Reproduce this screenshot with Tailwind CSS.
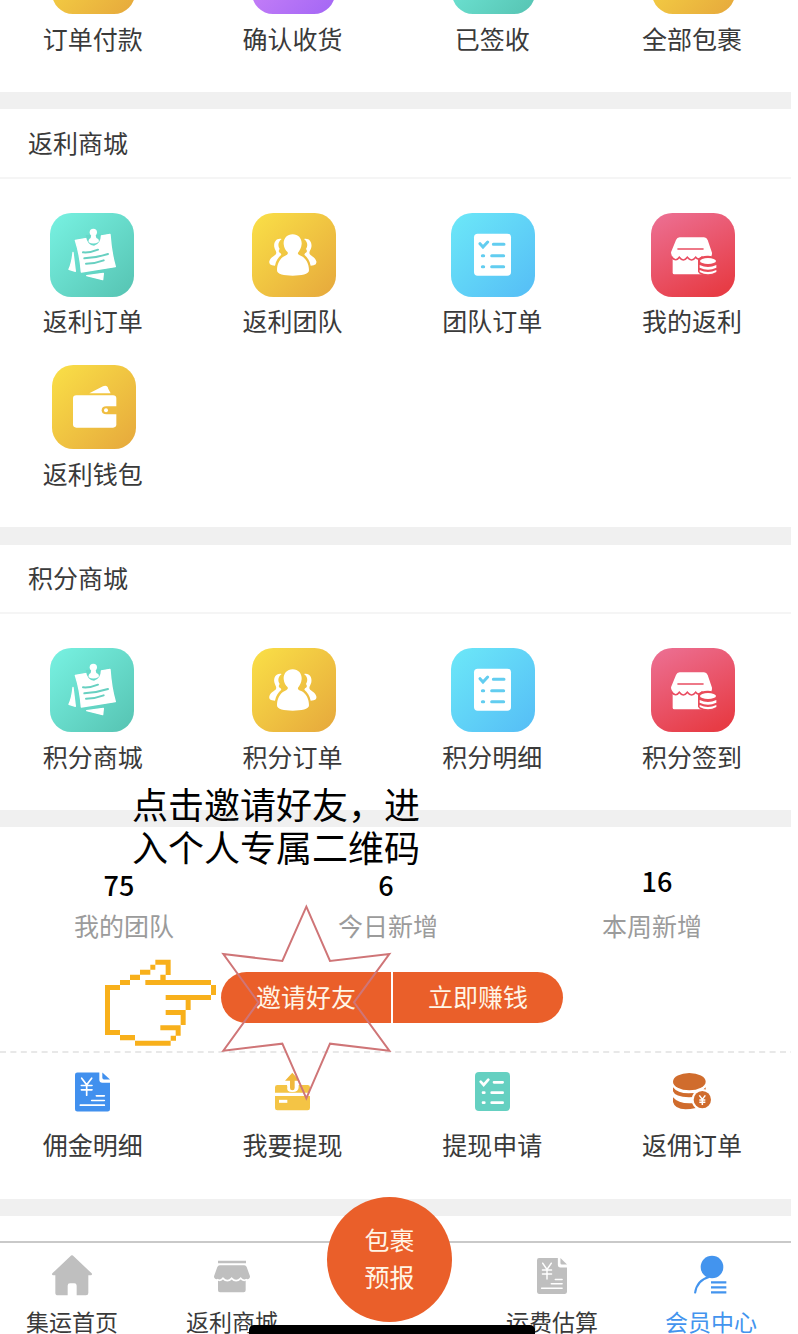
<!DOCTYPE html>
<html lang="zh-CN">
<head>
<meta charset="utf-8">
<title>会员中心</title>
<script src="https://cdn.jsdelivr.net/npm/@tailwindcss/browser@4"></script>
</head>
<body class="bg-white">
<svg class="absolute size-0">
  <defs>
    <linearGradient id="gTeal" x1="0" y1="0" x2="1" y2="1"><stop offset="0" stop-color="#78f2e2"/><stop offset="1" stop-color="#56c3b2"/></linearGradient>
    <linearGradient id="gGold" x1="0" y1="0" x2="1" y2="1"><stop offset="0" stop-color="#fae047"/><stop offset="1" stop-color="#e6a83c"/></linearGradient>
    <linearGradient id="gBlue" x1="0" y1="0" x2="1" y2="1"><stop offset="0" stop-color="#6ce8f8"/><stop offset="1" stop-color="#55bdf6"/></linearGradient>
    <linearGradient id="gRed" x1="0.2" y1="0" x2="0.7" y2="1"><stop offset="0" stop-color="#ec6d8f"/><stop offset="1" stop-color="#e73c45"/></linearGradient>
    <linearGradient id="gPurple" x1="0" y1="0" x2="1" y2="1"><stop offset="0" stop-color="#d78cf8"/><stop offset="1" stop-color="#a366f5"/></linearGradient>
  </defs>
  <symbol id="note" viewBox="0 0 252 252">
    <rect width="252" height="252" rx="64" fill="url(#gTeal)"/>
    <g fill="#fff" stroke="#fff" stroke-linejoin="round" stroke-width="4">
      <path d="M76 82 180 64 Q184 120 196 161 L94 177 Q90 125 76 82Z"/>
      <path d="M69 118 Q66 150 57 169 L76 175Z"/><path d="M110 188 160 181 158 200Z"/>
    </g>
    <path d="M107 66Q112 98 132 98Q152 94 153 64Z" fill="#67d9c9"/>
    <circle cx="130" cy="58" r="11" fill="#fff"/><path d="M124 64h12l3 11q10 3 7 12q-16 9-30 1q-2-9 6-13z" fill="#fff"/>
    <path d="M99 118 Q120 120 144 110M103 136 Q140 134 174 123M108 152 Q135 152 161 142" fill="none" stroke="#67d0c1" stroke-width="6" stroke-linecap="round"/>
  </symbol>
  <symbol id="team" viewBox="0 0 252 252">
    <rect width="252" height="252" rx="64" fill="url(#gGold)"/>
    <g fill="#fff">
      <path d="M122 64c17 0 28 13 27 29c-1 12-6 20-11 26c-2 5 3 7 10 10c15 8 23 24 23 43c0 12-23 16-49 16s-47-4-47-16c0-19 8-36 23-43c7-3 11-6 9-11c-6-6-11-13-12-25c-1-16 10-29 27-29z"/>
      <path id="sidePerson" d="M89 78c-15-4-25 9-22 25c2 9 8 14 5 20c-3 6-16 8-20 22q-2 10 8 12l9 1c3-15 9-25 19-33l-2-4c-7-3-7-8-3-13c-7-11-4-23 6-30z"/>
      <use href="#sidePerson" transform="translate(245 0) scale(-1 1)"/>
    </g>
  </symbol>
  <symbol id="list" viewBox="0 0 252 252">
    <rect width="252" height="252" rx="64" fill="url(#gBlue)"/>
    <rect x="69" y="62" width="111" height="126" rx="11" fill="#fff"/>
    <path d="M87 92l9 10 14-15M127 94h32M122 128h36M122 161h36M94 128h4M94 161h4" stroke="#62cdf0" stroke-width="9" stroke-linecap="round" fill="none"/>
  </symbol>
  <symbol id="store" viewBox="0 0 252 252">
    <rect width="252" height="252" rx="64" fill="url(#gRed)"/>
    <path d="M86 73h73q8 0 11 8l13 38q1 14-11 14h-98q-14 0-14-15l15-37q3-8 11-8z" fill="#fff"/>
    <path d="M65 130h118v50q0 4-4 4H70q-5 0-5-5z" fill="#fff"/>
    <path d="M63 134q12 13 22-1q12 16 24 0q13 16 25 0q8 11 19-1M81 108h75" stroke="#e94d62" stroke-width="5" fill="none" stroke-linecap="round"/>
    <path d="M141 137q12-10 31-9q27 1 27 18v25q-2 18-30 17q-22-1-28-12z" fill="#e94b59"/>
    <ellipse cx="171" cy="144" rx="24" ry="9" fill="#fff"/>
    <path d="M146 156q25 12 50 0v8q-25 12-50 0zM146 171q25 12 50 0v6q-25 14-50 0z" fill="#fff"/>
  </symbol>
  <symbol id="wallet" viewBox="0 0 252 252">
    <rect width="252" height="252" rx="64" fill="url(#gGold)"/>
    <path d="M112 85l41-21q13-5 16 8l7 13z" fill="#fff"/>
    <rect x="63" y="91" width="130" height="97" rx="10" fill="#fff"/>
    <path d="M196 124h-33q-14 0-14 12t14 12h33z" fill="#efbd40"/><circle cx="162" cy="136" r="6" fill="#fff"/>
  </symbol>
  <symbol id="bill" viewBox="0 0 105 117">
    <path d="M7 0h66v22q0 9 9 9h23v79q0 7-7 7H7q-7 0-7-7V7q0-7 7-7z" fill="currentColor"/>
    <path d="M82 0l23 21H87q-5 0-5-5z" fill="currentColor"/>
    <path d="M20 17l15 20 15-20M35 37v31M19 39h32M19 52h32M64 70h24M50 84h38M16 98h72" stroke="#fff" stroke-width="5" fill="none" stroke-linecap="round"/>
  </symbol>
</svg>

<div class="relative h-[1334px] w-[791px] overflow-hidden font-['Noto_Sans_CJK_SC',sans-serif] text-[25px] leading-[36px] text-[#3a3a3a]">

  <section class="h-[92px] overflow-hidden">
    <div class="-ml-[7px] grid w-[799px] grid-cols-4 justify-items-center">
      <div class="flex flex-col items-center"><div class="flex h-[14px] items-end"><svg class="ml-[2px] size-[83px]"><rect width="83" height="83" rx="21" fill="url(#gGold)"/></svg></div><span class="mt-[6px]">订单付款</span></div>
      <div class="flex flex-col items-center"><div class="flex h-[14px] items-end"><svg class="ml-[2px] size-[83px]"><rect width="83" height="83" rx="21" fill="url(#gPurple)"/></svg></div><span class="mt-[6px]">确认收货</span></div>
      <div class="flex flex-col items-center"><div class="flex h-[14px] items-end"><svg class="ml-[2px] size-[83px]"><rect width="83" height="83" rx="21" fill="url(#gTeal)"/></svg></div><span class="mt-[6px]">已签收</span></div>
      <div class="flex flex-col items-center"><div class="flex h-[14px] items-end"><svg class="ml-[2px] size-[83px]"><rect width="83" height="83" rx="21" fill="url(#gGold)"/></svg></div><span class="mt-[6px]">全部包裹</span></div>
    </div>
  </section>
  <div class="h-[17px] bg-[#f0f0f0]"></div>

  <section class="h-[418px]">
    <h2 class="flex h-[70px] items-center border-b-2 border-[#f5f5f5] pb-[3px] pl-[28px]">返利商城</h2>
    <div class="-ml-[7px] grid w-[799px] grid-cols-4 justify-items-center gap-y-[27px] pt-[34px]">
      <div class="flex flex-col items-center"><svg class="mr-[2px] size-[84px]"><use href="#note"/></svg><span class="mt-[5px]">返利订单</span></div>
      <div class="flex flex-col items-center"><svg class="ml-[2px] size-[84px]"><use href="#team"/></svg><span class="mt-[5px]">返利团队</span></div>
      <div class="flex flex-col items-center"><svg class="ml-[2px] size-[84px]"><use href="#list"/></svg><span class="mt-[5px]">团队订单</span></div>
      <div class="flex flex-col items-center"><svg class="ml-[2px] size-[84px]"><use href="#store"/></svg><span class="mt-[5px]">我的返利</span></div>
      <div class="flex flex-col items-center"><svg class="ml-[2px] size-[84px]"><use href="#wallet"/></svg><span class="mt-[6px]">返利钱包</span></div>
    </div>
  </section>
  <div class="h-[18px] bg-[#f0f0f0]"></div>

  <section class="h-[265px]">
    <h2 class="flex h-[69px] items-center border-b-2 border-[#f5f5f5] pb-[4px] pl-[28px]">积分商城</h2>
    <div class="-ml-[7px] grid w-[799px] grid-cols-4 justify-items-center pt-[34px]">
      <div class="flex flex-col items-center"><svg class="mr-[2px] size-[84px]"><use href="#note"/></svg><span class="mt-[6px]">积分商城</span></div>
      <div class="flex flex-col items-center"><svg class="ml-[2px] size-[84px]"><use href="#team"/></svg><span class="mt-[6px]">积分订单</span></div>
      <div class="flex flex-col items-center"><svg class="ml-[2px] size-[84px]"><use href="#list"/></svg><span class="mt-[6px]">积分明细</span></div>
      <div class="flex flex-col items-center"><svg class="ml-[2px] size-[84px]"><use href="#store"/></svg><span class="mt-[6px]">积分签到</span></div>
    </div>
  </section>
  <div class="h-[17px] bg-[#f0f0f0]"></div>

  <section class="flex h-[226px] flex-col">
    <div class="-ml-2 grid w-[792px] grid-cols-3 pt-[40px] text-center">
      <div class="flex flex-col text-[#9b9b9b]"><b class="mr-[10px] text-[27px] font-medium text-black">75</b><span class="mt-1">我的团队</span></div>
      <div class="flex flex-col text-[#9b9b9b]"><b class="mr-1 text-[27px] font-medium text-black">6</b><span class="mt-1">今日新增</span></div>
      <div class="-mt-1 flex flex-col text-[#9b9b9b]"><b class="ml-[10px] text-[27px] font-medium text-black">16</b><span class="mt-2">本周新增</span></div>
    </div>
    <div class="ml-[221px] mt-[29px] flex h-[51px] w-[342px] gap-[2px] text-[#fff5e6]">
      <div class="flex w-[170px] items-center justify-center rounded-l-full bg-[#ea5f2a] pb-[3px]">邀请好友</div>
      <div class="flex w-[170px] items-center justify-center rounded-r-full bg-[#ea5f2a] pb-[3px]">立即赚钱</div>
    </div>
    <svg class="mt-auto h-[2px] w-full"><path d="M0 1H791" stroke="#e8e8e8" stroke-width="2" stroke-dasharray="6 4.4"/></svg>
  </section>

  <section class="h-[146px]">
    <div class="-ml-[7px] grid w-[799px] grid-cols-4 justify-items-center pt-[19px]">
      <div class="flex flex-col items-center"><svg class="h-[40px] w-[35px] text-[#4190ee]"><use href="#bill"/></svg><span class="mt-[14px]">佣金明细</span></div>
      <div class="flex flex-col items-center">
        <svg class="h-[40px] w-[35px]" viewBox="0 0 105 120"><g fill="#f4c445"><path d="M7 39h91q7 0 7 7v16H0V46q0-7 7-7zM0 72h105v36q0 7-7 7H7q-7 0-7-7z"/></g><path d="M33 25h38v20q0 15-19 15T37 45z" fill="#fff"/><path d="M52 2l22 24H59v22q0 7-7 7t-7-7V26H30z" fill="#f0b83c"/><path d="M12 88h25" stroke="#fff" stroke-width="9"/></svg>
        <span class="mt-[14px]">我要提现</span></div>
      <div class="flex flex-col items-center">
        <svg class="h-[40px] w-[35px]" viewBox="0 0 105 120"><rect width="105" height="117" rx="12" fill="#65d0c1"/><path d="M17 29l9 10 14-16M57 31h26M50 62h33M50 92h33M24 62h4M24 92h4" stroke="#fff" stroke-width="8" stroke-linecap="round" fill="none"/></svg>
        <span class="mt-[14px]">提现申请</span></div>
      <div class="flex flex-col items-center">
        <svg class="mr-px h-[40px] w-[38px]" viewBox="0 0 114 120"><g fill="#d06c2d"><ellipse cx="49" cy="29" rx="49" ry="26"/><path d="M0 46q13 18 47 18q37 0 51-18v13q-21 17-50 17Q6 75 0 58zM0 76q15 18 49 18h20v14Q8 121 0 90z"/><circle cx="88" cy="83" r="32" fill="#fff"/><circle cx="88" cy="83" r="26"/></g><path d="M79 70l9 12 9-12M88 82v17M79 84h18M79 91h18" stroke="#fff" stroke-width="4.5" fill="none"/></svg>
        <span class="mt-[14px]">返佣订单</span></div>
    </div>
  </section>
  <div class="h-[17px] bg-[#f0f0f0]"></div>

  <nav class="mt-[25px] h-[92px] border-t-2 border-[#c9c9c9] text-[23px] leading-[34px]">
    <div class="-ml-2 grid w-[800px] grid-cols-5 justify-items-center pt-[12px]">
      <div class="flex flex-col items-center">
        <svg class="h-[42px] w-[40px]" viewBox="0 0 120 126"><path d="M60 1q3 0 5 3l54 51q3 5-3 6h-7v53q0 7-7 7H74V92q0-7-7-7H54q-7 0-7 7v29H18q-8 0-8-7V61H4q-6-1-3-6L55 4q2-3 5-3z" fill="#bfbfbf"/></svg>
        <span class="mt-[7px]">集运首页</span></div>
      <div class="flex flex-col items-center">
        <svg class="h-[42px] w-[36px]" viewBox="0 0 108 126"><g fill="#bfbfbf"><path d="M12 17h84v8H12zM17 31h74q5 0 7 5l10 28q0 8-8 9l-5 0v33q0 6-6 6H18q-6 0-6-6V73H8q-8-1-8-9l10-28q2-5 7-5z"/></g><path d="M9 73q10 7 18-3q13 14 26 0q13 14 27 0q8 10 19 3" fill="none" stroke="#fff" stroke-width="5"/></svg>
        <span class="mt-[7px]">返利商城</span></div>
      <div></div>
      <div class="flex flex-col items-center"><div class="flex h-[42px] items-center"><svg class="h-[36px] w-[30px] text-[#bfbfbf]" viewBox="0 0 105 117" preserveAspectRatio="none"><use href="#bill"/></svg></div><span class="mt-[7px]">运费估算</span></div>
      <div class="flex flex-col items-center text-[#4394ee]">
        <svg class="mr-[3px] h-[42px] w-[33px]" viewBox="0 0 99 126"><circle cx="54" cy="36" r="34" fill="currentColor"/><path d="M3 115Q8 76 45 66" fill="none" stroke="currentColor" stroke-width="6"/><path d="M51 82h46M51 97h46M51 112h46" stroke="currentColor" stroke-width="7"/></svg>
        <span class="mr-[2px] mt-[7px]">会员中心</span></div>
    </div>
  </nav>

  <!-- floating action button -->
  <div class="absolute left-[327px] top-[1197px] flex size-[125px] flex-col items-center justify-center rounded-full bg-[#ea5f2a] pb-[3px] leading-[37px] text-[#fff5e6]"><span>包裹</span><span>预报</span></div>
  <!-- home indicator -->
  <div class="absolute left-[249px] top-[1325px] h-[10px] w-[286px] rounded-t-[5px] bg-black"></div>

  <!-- annotation layer -->
  <p class="absolute left-[132px] top-[782px] w-[290px] text-[36px] leading-[43px] text-black">点击邀请好友，进<br>入个人专属二维码</p>
  <svg class="absolute left-[90px] top-[890px] h-[220px] w-[320px]" viewBox="0 0 960 660">
    <path fill="#f8b01b" d="M196 209h46v15h-46zM227 209h15v46h-15zM181 224h15v15h-15zM150 239h31v15h-31zM120 254h30v16h-30zM90 270h30v15h-30zM45 285h45v15H45zM45 285h15v150H45zM45 420h45v15H45zM90 435h45v16H90zM135 452h107v15H135zM242 437h16v15h-16zM257 406h15v31h-15zM211 406h61v15h-61zM272 360h15v45h-15zM227 360h60v15h-60zM287 315h15v45h-15zM227 315h136v15H227zM363 285h15v30h-15zM166 270h197v15H166zM211 254h16v16h-16z"/>
    <path fill="none" stroke="#cf7577" stroke-width="6" d="M649 50 720 213 898 192 792 337 898 482 720 461 649 625 577 461 400 482 505 337 400 192 577 213Z"/>
  </svg>
</div>
</body>
</html>
